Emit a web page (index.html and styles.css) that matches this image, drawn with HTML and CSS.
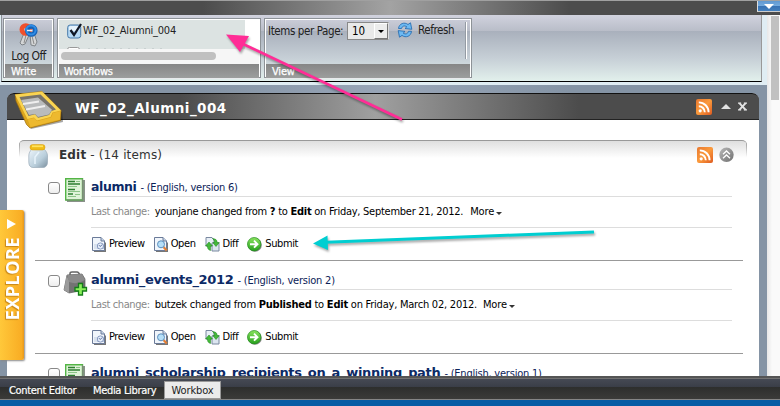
FILE: index.html
```html
<!DOCTYPE html>
<html lang="en">
<head>
<meta charset="utf-8">
<title>Workbox</title>
<link rel="stylesheet" href="styles.css">
</head>
<body>
<svg class="defs" width="0" height="0" aria-hidden="true">
  <defs>
    <linearGradient id="orange" x1="0" y1="0" x2="1" y2="1"><stop offset="0" stop-color="#e87830"/><stop offset=".5" stop-color="#fb9a3c"/><stop offset="1" stop-color="#de5a20"/></linearGradient>
    <linearGradient id="green" x1="0" y1="0" x2="0" y2="1"><stop offset="0" stop-color="#8be45f"/><stop offset="1" stop-color="#27a01e"/></linearGradient>
    <linearGradient id="glass" x1="0" y1="0" x2="1" y2="1"><stop offset="0" stop-color="#eef6fc"/><stop offset=".6" stop-color="#b9cedb"/><stop offset="1" stop-color="#7c909f"/></linearGradient>
    <linearGradient id="metal" x1="0" y1="0" x2="1" y2="1"><stop offset="0" stop-color="#b8b8b8"/><stop offset="1" stop-color="#707070"/></linearGradient>
    <symbol id="rss" viewBox="0 0 16 16"><rect width="16" height="16" rx="2" fill="url(#orange)"/><circle cx="4.2" cy="11.8" r="1.6" fill="#fff"/><path d="M2.8 7.2a6 6 0 0 1 6 6M2.8 3.4a9.8 9.8 0 0 1 9.8 9.8" fill="none" stroke="#fff" stroke-width="1.9"/></symbol>
    <symbol id="page" viewBox="0 0 14 15"><path d="M2 2H10L14 6V15H2z" fill="#777"/><path d="M.5.5H9L12.5 4V13.5H.5z" fill="#f0f5fb" stroke="#6b7b99"/><path d="M9 .5V4H12.5" fill="#c5d5e8" stroke="#6b7b99"/></symbol>
    <symbol id="preview" viewBox="0 0 14 15"><use href="#page"/><path d="M2 7.5H12V12H2z" fill="#bccbe0"/><path d="M2 9H5M2 11H5" stroke="#f5f8fc"/><circle cx="8.4" cy="9" r="3.1" fill="#e8f0fb" stroke="#7386b4" stroke-width=".8"/><path d="M7 8.2L8.3 9.5 10 7.6" fill="none" stroke="#536999"/></symbol>
    <symbol id="open" viewBox="0 0 14 15"><use href="#page"/><path d="M9.5 10L12.7 13.6" stroke="#e48035" stroke-width="2.2"/><circle cx="7" cy="7.3" r="3.5" fill="#b6dff8" stroke="#5c8fbe"/></symbol>
    <symbol id="diff" viewBox="0 0 15 15"><path d="M1 .5H7L9 3V9H1z" fill="#e8eff6" stroke="#7a89a0"/><path d="M7 6H14V14H7z" fill="#dce6f0" stroke="#7a89a0"/><path d="M4 5L7.5 9H5.5V13.5C3 13 2.3 11 2.5 9H.5zM11 9.5L7.8 5.5H9.7C9.5 3.5 8.5 2.3 7.5 1.5 11 1.7 12.3 3.5 12.2 5.5H14.3z" fill="#45b93a" stroke="#168019" stroke-width=".5"/></symbol>
    <symbol id="submit" viewBox="0 0 15 15"><circle cx="8" cy="8" r="6.8" fill="#888"/><circle cx="7.2" cy="7.2" r="6.7" fill="url(#green)" stroke="#218b1c" stroke-width=".7"/><path d="M3 7.2H10M7 3.7L10.5 7.2 7 10.7" fill="none" stroke="#fff" stroke-width="1.9"/></symbol>
    <symbol id="doc" viewBox="0 0 20 24"><path d="M2 2H20V24H2z" fill="#8a918a"/><path d="M.7.7H17.5V22H.7z" fill="#e0f3d9" stroke="#54b546" stroke-width="1.4"/><path d="M17.5 1V22H1" fill="none" stroke="#798e74"/><path d="M3 3.5H10M3 6H15M3 11.5H10M3 16H8" stroke="#2d7d30" stroke-width="1.3"/><path d="M11 3.5H15M3 8.5H12M3 13.5H15M3 18.5H11M10 16.5H15" stroke="#77b874" stroke-width=".8"/></symbol>
  </defs>
</svg>
<div class="app">
  <div class="topbar"><span class="drop"><i class="tri-down"></i></span></div>
  <div class="ribbon-area">
    <div class="ribbon">
      <section class="chunk write">
        <div class="chunk-body">
          <svg width="20" height="26" viewBox="0 0 20 26"><path d="M5 10L1 20 3 22 6 21 10 12zM11 11L12 22 16 23 18 19 15 10z" fill="#d4d6d7" stroke="#7f8488"/><path d="M7 12L5 20M13 13L15 21" stroke="#888"/><circle cx="6.8" cy="6.5" r="4" fill="none" stroke="#f0502c" stroke-width="4.6"/><circle cx="12.3" cy="7.5" r="4" fill="none" stroke="#1762b5" stroke-width="4.6"/><circle cx="12" cy="7" r="4.6" fill="none" stroke="#2f8ce6" stroke-width="2"/><path d="M8 7.5H13" stroke="#e8edf2" stroke-width="1.5"/></svg>
          <span class="logoff">Log Off</span>
        </div>
        <h2>Write</h2>
      </section>
      <section class="chunk workflows">
        <div class="chunk-body">
          <div class="flow"><svg width="16" height="16" viewBox="0 0 16 16"><rect x=".7" y="2" width="13" height="13" rx="2.5" fill="#b6d9f4" stroke="#4779a8"/><rect x="2" y="3" width="10" height="5" rx="1.5" fill="#e6f3fc"/><path d="M3.5 7L7 12 14 1" fill="none" stroke="#101724" stroke-width="2.3"/></svg><span>WF_02_Alumni_004</span></div>
          <div class="flow-next"><i></i><b></b></div>
          <div class="hscroll"><i></i></div>
        </div>
        <h2>Workflows</h2>
      </section>
      <section class="chunk view">
        <div class="chunk-body">
          <span class="ipp">Items per Page:</span>
          <span class="select"><span>10</span><b><i class="tri-down"></i></b></span>
          <svg class="refresh" width="16" height="16" viewBox="0 0 16 16"><path d="M1.5 6.5C2 1.5 7.5-.3 11 2.5L13.5.8 14.8 7.3 8 6.5 9.8 4.8C7.5 3.2 5.2 4 4.5 6.5zM14.5 9.3C14 14.5 8.5 16.2 5 13.4L2.5 15.2 1.2 8.6 8 9.4 6.2 11.1C8.5 12.7 10.8 11.9 11.5 9.3z" fill="#6db9f2" stroke="#1d66ad" stroke-width=".8"/></svg>
          <span class="refresh-label">Refresh</span>
          <span class="divider"></span>
        </div>
        <h2>View</h2>
      </section>
    </div>
  </div>
  <div class="workspace">
    <div class="scroller"></div>
    <div class="explore"><span>EXPLORE</span><i></i></div>
    <main class="panel">
      <header class="panel-head">
        <svg class="tray" width="48" height="39" viewBox="0 0 48 39"><path d="M3 9L16 38 48 31 47 21z" fill="#000" opacity=".35"/><path d="M0 3.5L27 .5 46 19.5 45.5 29.5 15 37 11.5 33.5 1 10z" fill="#dca51d" stroke="#9c6d0d" stroke-width=".7"/><path d="M0 3.5L27 .5 46 19.5 37.5 21.5 35.5 26 22 29.5 19 26.5 12.5 28z" fill="#f9d452"/><path d="M4.5 6L25.5 3.5 41 18.5 36.5 20 34 24 23 26.8 20 23.3 13.5 25z" fill="#77736a"/><path d="M6 9L23 6.5 37 18.7 34 23.5 23 26 20 23 14 24z" fill="#b9bbbc"/><path d="M8 13L24 10.5M11 18.5L30 15" stroke="#efefef" stroke-width="2.2"/><path d="M12.7 28.5L19.5 27 22 30.3 36 26.5 38 22 45.5 20 45 28.5 15.5 36z" fill="#edb92f"/></svg>
        <h1>WF_02_Alumni_004</h1>
        <svg width="16" height="16"><use href="#rss"/></svg>
        <svg class="up" width="10" height="5" viewBox="0 0 10 5"><path d="M0 5L5 0 10 5z" fill="#e2e2e2"/></svg>
        <svg class="close" width="9" height="9" viewBox="0 0 10 9"><path d="M1.5.8L8.5 8.2M8.5.8L1.5 8.2" stroke="#e2e2e2" stroke-width="2.2"/><path d="M0 .7H3.5M6.5.7H10M0 8.3H3.5M6.5 8.3H10" stroke="#e2e2e2" stroke-width="1.3"/></svg>
      </header>
      <header class="state">
        <svg class="jar" width="20" height="24" viewBox="0 0 20 24"><path d="M4 5H16C18 7 19.5 9 19.5 12V18C19.5 21 18 23.5 15 23.5H5C2 23.5.8 21 .8 18V12C.8 9 2 7 4 5z" fill="url(#glass)" stroke="#9aabb8" stroke-width=".7"/><path d="M11 8L7 13V20" fill="none" stroke="#e8f4fb" stroke-width="1.5"/><rect x="2" y=".5" width="15" height="5.5" rx="2.6" fill="#f0bc18" stroke="#d29a12" stroke-width=".5"/><path d="M4 2.3H15" stroke="#ffe35f" stroke-width="1.7"/></svg>
        <h2><b>Edit</b> - (14 items)</h2>
        <svg width="16" height="16"><use href="#rss"/></svg>
        <svg class="collapse" width="16" height="16" viewBox="0 0 16 16"><circle cx="7.5" cy="7.8" r="7.2" fill="url(#metal)"/><path d="M4 7.3L7.5 4 11 7.3M4 11.3L7.5 8 11 11.3" fill="none" stroke="#fff" stroke-width="1.3"/></svg>
      </header>
      <article class="item">
        <i class="check"></i>
        <svg class="type" width="20" height="24"><use href="#doc"/></svg>
        <div class="content">
          <div class="title"><b class="t1">alumni</b><span>- (English, version 6)</span></div>
          <p><em>Last change:</em><span class="m1">younjane changed from <b>?</b> to <b>Edit</b> on Friday, September 21, 2012.</span><span class="more-label">More</span><i class="more"></i></p>
          <nav><a><svg width="14" height="15"><use href="#preview"/></svg>Preview</a><a><svg width="14" height="15"><use href="#open"/></svg>Open</a><a><svg width="15" height="15"><use href="#diff"/></svg>Diff</a><a><svg width="15" height="15"><use href="#submit"/></svg>Submit</a></nav>
        </div>
      </article>
      <article class="item">
        <i class="check"></i>
        <svg class="type bag" width="25" height="25" viewBox="0 0 25 25"><path d="M7 5V2.5Q7 1 9 1H14Q16 1 16.5 4" fill="none" stroke="#666" stroke-width="1.5"/><path d="M4 4L19 3 22 8V19L6 22 1 19z" fill="#737373" stroke="#5c5c5c" stroke-width=".7"/><path d="M3.5 5L6 9V22L1 19z" fill="#9b9b9b"/><path d="M4 4L19 3 22 9Q14 14 6 11z" fill="#8b8b8b"/><path d="M15.5 12.5H19.5V16.5H23.5V20H19.5V24H15.5V20H12V16.5H15.5z" fill="#8af05a" stroke="#147d19" stroke-width="1.3"/></svg>
        <div class="content">
          <div class="title"><b class="t2">alumni_events_2012</b><span>- (English, version 2)</span></div>
          <p><em>Last change:</em><span class="m2">butzek changed from <b>Published</b> to <b>Edit</b> on Friday, March 02, 2012.</span><span class="more-label">More</span><i class="more"></i></p>
          <nav><a><svg width="14" height="15"><use href="#preview"/></svg>Preview</a><a><svg width="14" height="15"><use href="#open"/></svg>Open</a><a><svg width="15" height="15"><use href="#diff"/></svg>Diff</a><a><svg width="15" height="15"><use href="#submit"/></svg>Submit</a></nav>
        </div>
      </article>
      <article class="item">
        <i class="check"></i>
        <svg class="type" width="20" height="24"><use href="#doc"/></svg>
        <div class="content">
          <div class="title"><b class="t3">alumni_scholarship_recipients_on_a_winning_path</b><span>- (English, version 1)</span></div>
        </div>
      </article>
    </main>
  </div>
  <footer><span class="ce">Content Editor</span><span class="ml">Media Library</span><span class="wb">Workbox</span></footer>
  <div class="base"></div>
  <svg class="arrows" width="780" height="406" viewBox="0 0 780 406"><g class="arrow"><path d="M402 119.5L241 43" stroke="#ff2d96" stroke-width="2.6"/><path d="M226 34.5L249 36 240 52z" fill="#ff2d96"/></g><g class="arrow"><path d="M594 232L326 242.3" stroke="#00ced1" stroke-width="3"/><path d="M313 243.5L327.5 235.5 328 250z" fill="#00ced1"/></g></svg>
</div>
</body>
</html>
```
FILE: styles.css
```css
* { box-sizing: border-box; }
body { margin: 0; overflow: hidden; font: 11px/14px "DejaVu Sans Condensed", "DejaVu Sans", sans-serif; font-stretch: condensed; letter-spacing: -.4px; color: #000; }
h1, h2, p { margin: 0; font-weight: normal; }
.defs { position: absolute; }
.app { position: relative; width: 780px; height: 406px; display: flex; flex-direction: column; overflow: hidden; }
span, b, h1, h2, em { white-space: nowrap; }
svg { flex: none; }

.topbar { height: 15px; flex: none; display: flex; justify-content: flex-end; border-top: 1px solid #a0a0a0; background: linear-gradient(90deg, #4c4c4c 26%, #a3a3a3 50%, #4c4c4c 73%); }
.drop { width: 23px; height: 11px; border-left: 1px solid #ddd; border-bottom: 1px solid #ccc; background: linear-gradient(#6098d0, #73a9dd 45%, #3771b2 50%, #4380bf); display: flex; justify-content: center; align-items: center; }
.tri-down { border: 5px solid transparent; border-top-color: #fff; border-bottom: 0; }

.ribbon-area { height: 70px; flex: none; padding: 0 18px 0 1px; background: #e0edf3; }
.ribbon { height: 67px; border-right: 1px solid #999; border-bottom: 1px solid #000; border-left: 1px solid #8c9299; background: linear-gradient(#d1d2de, #b9bdc8 16px, #a9b0bc 16px, #c7d0d7 44px, #e2f0ec 66px); display: flex; padding: 3px 0 3px 1px; gap: 3px; }
.chunk { height: 60px; border: 1px solid #8d9297; box-shadow: inset 0 0 0 1px #fff, 0 1px #e8eaec; padding: 1px; display: flex; flex-direction: column; }
.chunk-body { height: 44px; flex: none; display: flex; overflow: hidden; }
.chunk h2 { height: 14px; background: linear-gradient(#868686, #9c9e9d); color: #fff; font-size: 11px; line-height: 15px; padding-left: 6px; letter-spacing: -.2px; -webkit-text-stroke: .25px #fff; }
.write { width: 51px; }
.write .chunk-body { flex-direction: column; align-items: center; padding-top: 3px; }
.logoff { font-size: 12px; line-height: 14px; letter-spacing: -.6px; color: #222; }
.workflows { width: 204px; }
.workflows h2 { padding-left: 5px; }
.workflows .chunk-body { flex-direction: column; background: linear-gradient(90deg, #dce3e2 186px, #fff 186px); }
.flow { height: 23px; padding: 0 0 1px 8px; display: flex; align-items: center; font-size: 11px; letter-spacing: -.2px; color: #222; }
.flow-next { height: 6px; padding: 4px 0 0 8px; display: flex; gap: 8px; }
.flow-next i { width: 13px; height: 5px; border: 1px solid #999; border-radius: 3px; background: #fff; }
.flow-next b { width: 75px; height: 1px; margin-top: 1px; background: repeating-linear-gradient(90deg, #c8d0d0 0 2px, #dce3e2 2px 8px); }
.hscroll { flex: 1; background: #f6f6f6; padding: 3px 2px; }
.hscroll i { display: block; width: 155px; height: 8px; border-radius: 4px; background: #c0c0c0; }
.view { width: 208px; }
.view .chunk-body { padding: 2px 3px 0 0; align-items: flex-start; font-size: 11.5px; color: #222; }
.ipp { width: 81px; line-height: 18px; padding-left: 2px; letter-spacing: -.4px; }
.select { width: 42px; height: 18px; border: 1px solid #888; border-right-color: #ddd; background: #e9e9e9; display: flex; justify-content: space-between; color: #000; line-height: 16px; padding-left: 4px; letter-spacing: 0; }
.select b { width: 14px; border: 1px solid #fff; border-right-color: #777; border-bottom-color: #777; background: #ececec; display: flex; align-items: center; justify-content: center; }
.select .tri-down { border-width: 3px; border-bottom: 0; border-top-color: #000; }
.refresh { margin-left: 8px; }
.refresh-label { margin-left: 5px; line-height: 17px; }
.divider { width: 2px; height: 37px; margin-left: auto; border-left: 1px solid #949ba3; border-right: 1px solid #fff; }

.workspace { height: 291px; flex: none; position: relative; overflow: hidden; background: linear-gradient(90deg, #8594a5 26%, #99a6b8 50%, #8594a5 73%) 0 0 / 100% 8px no-repeat #8594a5; }
.panel { width: 752px; height: 283px; margin: 8px 0 0 7px; background: #fff; border-radius: 7px 7px 0 0; }
.panel-head { height: 27px; border-top: 1px solid #111; border-bottom: 1px solid #222; border-radius: 7px 7px 0 0; background: linear-gradient(90deg, #4b4b4b 23%, #a0a0a0 49%, #4c4c4c 76%); display: flex; align-items: center; padding: 0 12px 0 8px; position: relative; }
.tray { margin: 7px 0 0; align-self: center; }
h1 { font: bold 13.5px/18px "DejaVu Sans", sans-serif; letter-spacing: .46px; color: #fff; margin: 2px auto 0 12px; }
.up { margin-left: 9px; }
.close { margin-left: 7px; }
.state { width: 728px; height: 30px; margin: 20px 12px 0; border-top: 1px solid #999; border-radius: 5px 5px 0 0; background: linear-gradient(#999, transparent 16px) left / 1px 100% no-repeat, linear-gradient(#999, transparent 16px) right / 1px 100% no-repeat, linear-gradient(#dfdfdf, #fff 17px); display: flex; align-items: center; padding: 0 12px 2px 9px; }
.jar { margin-top: 2px; }
.state h2 { font: 12px/16px "DejaVu Sans", sans-serif; letter-spacing: .16px; color: #333; margin: 0 auto 0 11px; }
.collapse { margin-left: 6px; }

.item { height: 93px; margin: 0 16px 0 28px; padding: 8px 11px 0 13px; border-bottom: 1px solid #999; display: flex; align-items: flex-start; }
.state + .item { height: 91px; padding-top: 6px; }
.check { width: 12px; height: 12px; margin: 6px 5px 0 0; border: 1px solid #888; border-radius: 3px; background: linear-gradient(#fff, #eee); flex: none; }
.type { margin-top: 2px; }
.type.bag { margin: 2px -3px 0 -2px; }
.content { flex: 1; margin-left: 6px; }
.title { height: 21px; display: flex; align-items: baseline; gap: 4px; line-height: 20px; color: #0b2258; border-bottom: 1px solid #ddd; letter-spacing: -.22px; }
.title b { font: bold 13px/22px "DejaVu Sans", sans-serif; color: #0c2a66; letter-spacing: -.32px; }
.title .t1 { font-size: 12.5px; letter-spacing: -.4px; }
p { height: 31px; border-bottom: 1px solid #ddd; display: flex; align-items: center; gap: 5px; line-height: 30px; }
.m1 { letter-spacing: -.26px; margin-right: 2px; }
.m2 { letter-spacing: -.23px; margin-right: 1px; }
.more-label { letter-spacing: -.15px; }
em { font-style: normal; color: #888; }
.more { border: 3.5px solid transparent; border-top-color: #333; border-bottom: 0; margin: 2px 0 0 -3px; }
nav { display: flex; height: 32px; align-items: center; gap: 9px; padding-left: 1px; }
a { display: flex; align-items: center; gap: 3px; }

.explore { position: absolute; left: 0; top: 125px; width: 24px; height: 150px; border-radius: 0 2px 2px 0; background: linear-gradient(90deg, #ffc83a, #f9ad24 90%, #e8981a); box-shadow: 1px 1px 2px #888; display: flex; flex-direction: column-reverse; justify-content: space-between; align-items: center; padding: 9px 1px 40px 0; }
.explore span { writing-mode: vertical-rl; transform: rotate(180deg); font: bold 18px/22px "Open Sans", sans-serif; letter-spacing: .5px; color: #fff; text-shadow: -1px -1px 1px #c88718; }
.explore i { border: 5px solid transparent; border-left: 9px solid #fff; border-right: 0; }
.scroller { position: absolute; right: 0; top: 0; width: 13px; height: 291px; background: linear-gradient(90deg, #e7e7e7, #fafafa 5px); }
.app::after { content: ""; position: absolute; right: 0; top: 15px; width: 13px; height: 85px; background: linear-gradient(#c1c1c1, #c1c1c1) 4px 1px / 8px 84px no-repeat, linear-gradient(90deg, #e7e7e7, #fafafa 5px); }

footer { height: 24px; flex: none; border-top: 2px solid #555; border-bottom: 1px solid #858585; background: linear-gradient(#727272 1px, #454954 1px, #3a3e48 9px, #2d2e2d 9px, #3b3b39); display: flex; align-items: flex-start; color: #fff; line-height: 25px; padding-left: 9px; letter-spacing: -.33px; }
footer span { -webkit-text-stroke: .2px #fff; }
.ce { width: 84px; }
.ml { width: 71px; }
footer .wb { width: 57px; height: 18px; margin-top: 3px; background: #ebebeb; border: 1px solid #999; color: #222; line-height: 17px; text-align: center; letter-spacing: -.1px; -webkit-text-stroke: 0; }
.base { flex: 1; background: #075ca5; }
.arrows { position: absolute; left: 0; top: 0; }
.arrow { fill: none; filter: drop-shadow(1px 2px 1px rgba(0,0,0,.35)); }
```
